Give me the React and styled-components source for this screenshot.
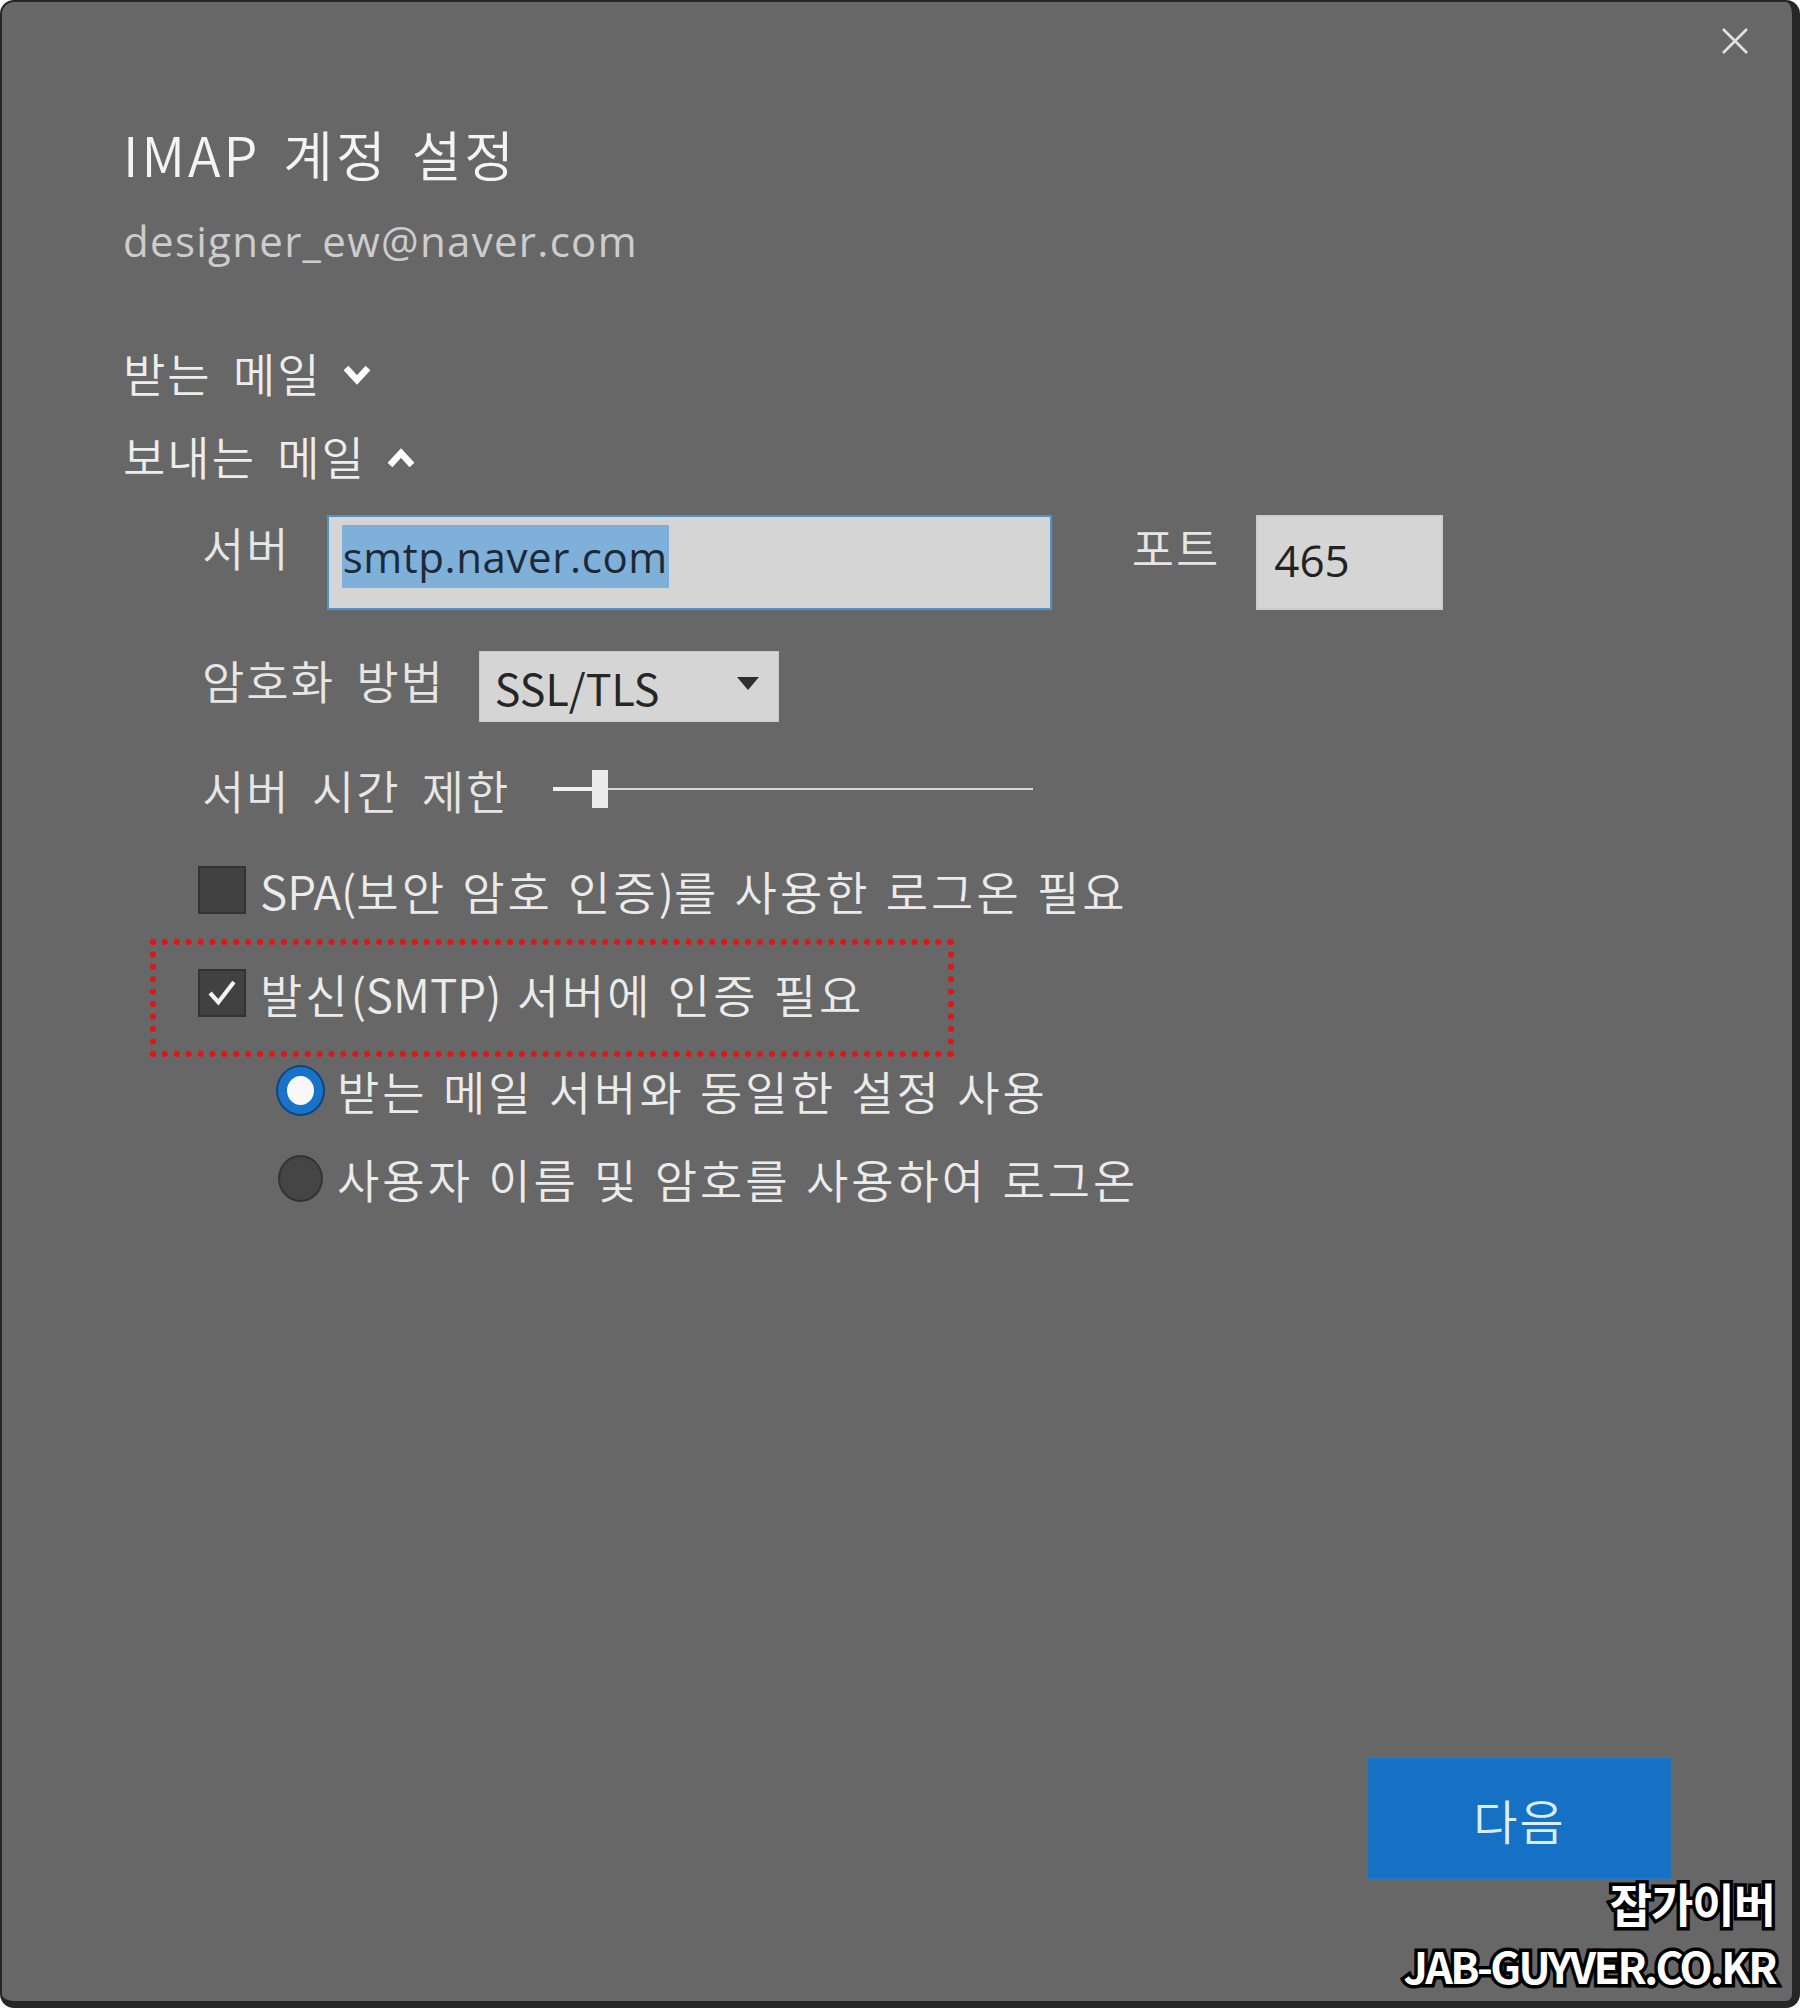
import React from 'react';
import styled, { createGlobalStyle } from 'styled-components';

const GlobalStyle = createGlobalStyle`
    html, body {
        margin: 0;
        padding: 0;
        background: #ffffff;
    }
    * {
        box-sizing: border-box;
    }
`;

const KR = `"Noto Sans CJK KR", "Noto Sans", sans-serif`;
const LATIN = `"Open Sans", "Noto Sans CJK KR", sans-serif`;

function ChevronIcon({ up }) {
    return (
        <Chevron viewBox="0 0 30 22" width="30" height="22">
            <polyline
                points={up ? '4,18 15,6 26,18' : '4,4 15,16 26,4'}
                fill="none"
                stroke="#ffffff"
                strokeWidth="6.5"
                strokeLinejoin="miter"
            />
        </Chevron>
    );
}

function CloseIcon() {
    return (
        <svg viewBox="0 0 28 28" width="28" height="28">
            <path d="M2 2 L26 26 M26 2 L2 26" stroke="#e2e2e2" strokeWidth="2.6" />
        </svg>
    );
}

function CheckBox({ checked }) {
    return (
        <Box>
            {checked && (
                <svg viewBox="0 0 48 48" width="44" height="44">
                    <polyline
                        points="11,24 20,34 37,12"
                        fill="none"
                        stroke="#f4f4f4"
                        strokeWidth="4.5"
                    />
                </svg>
            )}
        </Box>
    );
}

function Slider() {
    return (
        <Track>
            <Filled />
            <Thumb />
            <Rest />
        </Track>
    );
}

export default function App() {
    return (
        <>
            <GlobalStyle />
            <Window>
                <TopBar>
                    <CloseIcon />
                </TopBar>
                <Content>
                    <Title>IMAP 계정 설정</Title>
                    <Subtitle>designer_ew@naver.com</Subtitle>

                    <SectionHeader first>
                        받는 메일 <ChevronIcon />
                    </SectionHeader>
                    <SectionHeader>
                        보내는 메일 <ChevronIcon up />
                    </SectionHeader>

                    <FieldRow top={30} gap={36}>
                        <Label tall>서버</Label>
                        <TextInput focused width={725}>
                            <Selected>smtp.naver.com</Selected>
                        </TextInput>
                        <Label tall spaced>포트</Label>
                        <TextInput width={187}>465</TextInput>
                    </FieldRow>

                    <FieldRow top={41} gap={34}>
                        <Label>암호화 방법</Label>
                        <Select>
                            <span>SSL/TLS</span>
                            <Caret />
                        </Select>
                    </FieldRow>

                    <FieldRow top={37} gap={43} center>
                        <Label>서버 시간 제한</Label>
                        <Slider />
                    </FieldRow>

                    <CheckRow top={41}>
                        <CheckBox />
                        <OptionText>
                            <Latin>SPA(</Latin>보안 암호 인증<Latin>)</Latin>를 사용한 로그온 필요
                        </OptionText>
                    </CheckRow>

                    <Highlight>
                        <CheckRow>
                            <CheckBox checked />
                            <OptionText>
                                발신<Latin>(SMTP)</Latin> 서버에 인증 필요
                            </OptionText>
                        </CheckRow>
                    </Highlight>

                    <RadioRow top={3}>
                        <Radio selected />
                        <OptionText>받는 메일 서버와 동일한 설정 사용</OptionText>
                    </RadioRow>
                    <RadioRow top={28}>
                        <Radio />
                        <OptionText>사용자 이름 및 암호를 사용하여 로그온</OptionText>
                    </RadioRow>
                </Content>

                <Footer>
                    <PrimaryButton>다음</PrimaryButton>
                </Footer>

                <Watermark>
                    <WatermarkLine>잡가이버</WatermarkLine>
                    <WatermarkLine url>JAB-GUYVER.CO.KR</WatermarkLine>
                </Watermark>
            </Window>
        </>
    );
}

const Window = styled.div`
    position: relative;
    width: 1800px;
    height: 2008px;
    display: flex;
    flex-direction: column;
    background: #676767;
    border-style: solid;
    border-color: #262626;
    border-width: 2px 8px 7px 2px;
    border-radius: 14px;
    font-family: ${KR};
    color: #e9e9e9;
    overflow: hidden;
`;

const TopBar = styled.div`
    display: flex;
    justify-content: flex-end;
    align-items: center;
    height: 78px;
    padding-right: 43px;
`;

const Content = styled.div`
    display: flex;
    flex-direction: column;
    align-items: flex-start;
    padding-left: 121px;
`;

const Title = styled.div`
    margin-top: 39px;
    height: 70px;
    line-height: 70px;
    font-size: 54px;
    font-weight: 350;
    letter-spacing: 3px;
    word-spacing: 8px;
    color: #f4f4f4;
`;

const Subtitle = styled.div`
    margin-top: 22px;
    height: 60px;
    line-height: 60px;
    font-family: ${LATIN};
    font-size: 42px;
    letter-spacing: 1.3px;
    color: #cdcdcd;
`;

const SectionHeader = styled.div`
    display: flex;
    align-items: center;
    gap: 20px;
    margin-top: ${({ first }) => (first ? 71 : 23)}px;
    height: 60px;
    font-size: 46px;
    font-weight: 350;
    letter-spacing: 2px;
    word-spacing: 9px;
    color: #ededed;
`;

const Chevron = styled.svg`
    display: block;
    margin-top: 6px;
`;

const FieldRow = styled.div`
    display: flex;
    align-items: ${({ center }) => (center ? 'center' : 'flex-start')};
    gap: ${({ gap }) => gap}px;
    margin-top: ${({ top }) => top}px;
    margin-left: 79px;
    min-height: 60px;
`;

const Label = styled.div`
    height: ${({ tall }) => (tall ? 62 : 56)}px;
    line-height: ${({ tall }) => (tall ? 62 : 56)}px;
    font-size: 46px;
    font-weight: 350;
    letter-spacing: 2px;
    word-spacing: 9px;
    color: #e6e6e6;
    white-space: nowrap;
    margin-left: ${({ spaced }) => (spaced ? 44 : 0)}px;
`;

const TextInput = styled.div`
    width: ${({ width }) => width}px;
    height: 95px;
    display: flex;
    align-items: center;
    padding: 0 ${({ focused }) => (focused ? 13 : 16)}px 6px;
    background: #d5d5d5;
    border: 2px solid ${({ focused }) => (focused ? '#4d93cf' : '#cdcdcd')};
    font-family: ${LATIN};
    font-size: 44px;
    color: #222222;
`;

const Selected = styled.span`
    display: inline-block;
    height: 63px;
    line-height: 63px;
    padding: 0 1px;
    margin-top: -6px;
    background: #7fb0d9;
    color: #1d2a36;
    font-size: 42px;
    letter-spacing: 0.6px;
`;

const Select = styled.div`
    width: 300px;
    height: 71px;
    display: flex;
    align-items: center;
    justify-content: space-between;
    padding: 0 19px 0 15px;
    background: #d5d5d5;
    border: 1px solid #c9c9c9;
    font-family: ${KR};
    font-size: 43px;
    color: #262626;
`;

const Caret = styled.span`
    width: 0;
    height: 0;
    margin-top: -6px;
    border-left: 11px solid transparent;
    border-right: 11px solid transparent;
    border-top: 13px solid #2f2f2f;
`;

const Track = styled.div`
    display: flex;
    align-items: center;
    width: 480px;
    height: 40px;
`;

const Filled = styled.div`
    width: 39px;
    height: 4px;
    background: #f2f2f2;
`;

const Thumb = styled.div`
    width: 16px;
    height: 38px;
    background: #ececec;
`;

const Rest = styled.div`
    flex: 1;
    height: 2px;
    background: #d8d8d8;
`;

const CheckRow = styled.div`
    display: flex;
    align-items: center;
    gap: 14px;
    height: 60px;
    margin-top: ${({ top }) => top || 0}px;
    margin-left: ${({ top }) => (top ? 75 : 0)}px;
`;

const Box = styled.div`
    width: 48px;
    height: 48px;
    display: flex;
    align-items: center;
    justify-content: center;
    background: #414141;
    border: 2px solid #333333;
`;

const OptionText = styled.div`
    font-size: 46px;
    font-weight: 350;
    line-height: 60px;
    letter-spacing: 3px;
    word-spacing: 2px;
    color: #ebebeb;
    white-space: nowrap;
`;

const Latin = styled.span`
    letter-spacing: 0;
`;

const Highlight = styled.div`
    margin-top: 19px;
    margin-left: 27px;
    width: 804px;
    padding: 18px 0 28px 42px;
    border: 6px dotted #e01515;
`;

const RadioRow = styled.div`
    display: flex;
    align-items: center;
    gap: 14px;
    height: 60px;
    margin-top: ${({ top }) => top}px;
    margin-left: 155px;
`;

const Radio = styled.div`
    width: 45px;
    height: 47px;
    border-radius: 50%;
    background: ${({ selected }) => (selected ? '#f8f8f8' : '#454545')};
    border: ${({ selected }) => (selected ? '9px solid #1872c8' : '2px solid #333333')};
    box-shadow: ${({ selected }) => (selected ? '0 0 0 2px #10447a' : 'none')};
`;

const Footer = styled.div`
    margin-top: auto;
    display: flex;
    justify-content: flex-end;
    padding: 0 120px 122px 0;
`;

const PrimaryButton = styled.button`
    width: 305px;
    height: 121px;
    border: 1px solid #1e78cf;
    background: #1670c3;
    color: #d9eeff;
    font-family: ${KR};
    font-size: 48px;
    font-weight: 350;
    letter-spacing: 2px;
`;

const Watermark = styled.div`
    position: absolute;
    right: 17px;
    bottom: 6px;
    display: flex;
    flex-direction: column;
    align-items: flex-end;
`;

const WatermarkLine = styled.span`
    display: block;
    font-family: ${KR};
    font-weight: 700;
    color: #ffffff;
    font-size: ${({ url }) => (url ? 43 : 46)}px;
    line-height: ${({ url }) => (url ? 60 : 66)}px;
    letter-spacing: ${({ url }) => (url ? -2.6 : -1)}px;
    paint-order: stroke fill;
    -webkit-text-stroke: 7px #000000;
`;
